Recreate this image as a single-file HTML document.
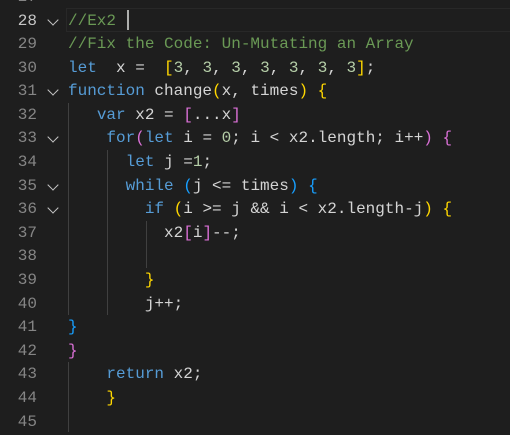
<!DOCTYPE html>
<html><head><style>
body{margin:0;width:510px;height:430px;background:#1e1e1e;overflow:hidden;position:relative;font-family:"Liberation Mono",monospace;font-size:16px}
#w{position:absolute;left:0;top:2px;width:510px;height:430px}
.ln{position:absolute;left:0;width:37px;text-align:right;color:#858585;height:23.6px;line-height:23.6px}
.cd{position:absolute;left:68px;white-space:pre;color:#d4d4d4;height:23.6px;line-height:23.6px}
.fd{position:absolute;left:49px;width:7px;height:7px;border-right:1.3px solid #c5c5c5;border-bottom:1.3px solid #c5c5c5;transform:rotate(45deg)}
.g{position:absolute;width:1px;background:#404040}
.c{color:#6a9955}.k{color:#569cd6}.n{color:#b5cea8}.y{color:#ffd700}.p{color:#da70d6}.b{color:#179fff}
</style></head><body><div id="w">
<div style="position:absolute;left:66px;top:6px;width:444px;height:22px;border:1px solid #282828"></div>
<div style="position:absolute;left:127px;top:8px;width:2px;height:20px;background:#aeafad"></div>
<div class="g" style="left:68px;top:101px;height:212px"></div>
<div class="g" style="left:68px;top:360px;height:70px"></div>
<div class="g" style="left:107px;top:148px;height:165px"></div>
<div class="g" style="left:146px;top:219px;height:47px"></div>
<div class="ln" style="top:-16px">27</div>
<div class="ln" style="top:7.5px;color:#c6c6c6">28</div><div class="fd" style="top:14px"></div>
<div class="cd c" style="top:7.5px">//Ex2 </div>
<div class="ln" style="top:31px">29</div><div class="cd c" style="top:31px">//Fix the Code: Un-Mutating an Array</div>
<div class="ln" style="top:55px">30</div><div class="cd" style="top:55px"><span class="k">let</span>  x =  <span class="y">[</span><span class="n">3</span>, <span class="n">3</span>, <span class="n">3</span>, <span class="n">3</span>, <span class="n">3</span>, <span class="n">3</span>, <span class="n">3</span><span class="y">]</span>;</div>
<div class="ln" style="top:78px">31</div><div class="fd" style="top:84px"></div><div class="cd" style="top:78px"><span class="k">function</span> change<span class="y">(</span>x, times<span class="y">)</span> <span class="y">{</span></div>
<div class="ln" style="top:102px">32</div><div class="cd" style="top:102px">   <span class="k">var</span> x2 = <span class="p">[</span>...x<span class="p">]</span></div>
<div class="ln" style="top:125px">33</div><div class="fd" style="top:131px"></div><div class="cd" style="top:125px">    <span class="k">for</span><span class="p">(</span><span class="k">let</span> i = <span class="n">0</span>; i &lt; x2.length; i++<span class="p">)</span> <span class="p">{</span></div>
<div class="ln" style="top:149px">34</div><div class="cd" style="top:149px">      <span class="k">let</span> j =<span class="n">1</span>;</div>
<div class="ln" style="top:173px">35</div><div class="fd" style="top:179px"></div><div class="cd" style="top:173px">      <span class="k">while</span> <span class="b">(</span>j &lt;= times<span class="b">)</span> <span class="b">{</span></div>
<div class="ln" style="top:196px">36</div><div class="fd" style="top:202px"></div><div class="cd" style="top:196px">        <span class="k">if</span> <span class="y">(</span>i &gt;= j &amp;&amp; i &lt; x2.length-j<span class="y">)</span> <span class="y">{</span></div>
<div class="ln" style="top:220px">37</div><div class="cd" style="top:220px">          x2<span class="p">[</span>i<span class="p">]</span>--;</div>
<div class="ln" style="top:243px">38</div>
<div class="ln" style="top:267px">39</div><div class="cd" style="top:267px">        <span class="y">}</span></div>
<div class="ln" style="top:291px">40</div><div class="cd" style="top:291px">        j++;</div>
<div class="ln" style="top:314px">41</div><div class="cd" style="top:314px"><span class="b">}</span></div>
<div class="ln" style="top:338px">42</div><div class="cd" style="top:338px"><span class="p">}</span></div>
<div class="ln" style="top:361px">43</div><div class="cd" style="top:361px">    <span class="k">return</span> x2;</div>
<div class="ln" style="top:385px">44</div><div class="cd" style="top:385px">    <span class="y">}</span></div>
<div class="ln" style="top:409px">45</div>
</div></body></html>
